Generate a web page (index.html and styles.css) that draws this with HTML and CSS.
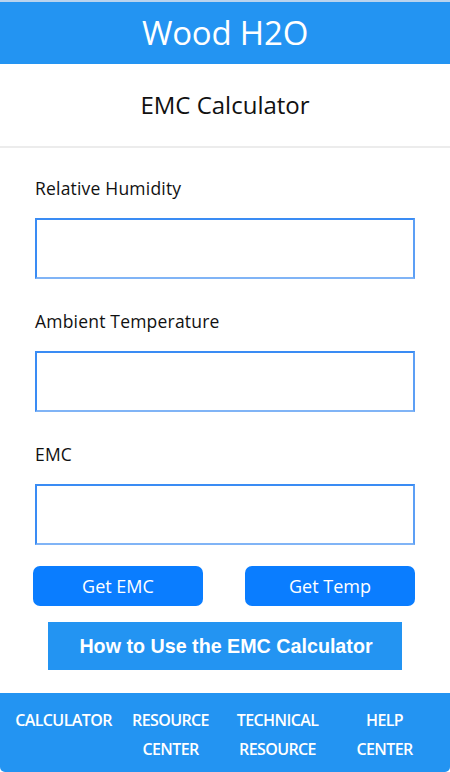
FILE: index.html
```html
<!DOCTYPE html>
<html>
<head>
<meta charset="utf-8">
<link rel="stylesheet" href="styles.css">
</head>
<body>
<div class="app">
  <header class="topbar"><h1 class="brand">Wood H2O</h1></header>
  <div class="subhead"><h2 class="page-title">EMC Calculator</h2></div>
  <main class="form">
    <label class="field-label">Relative Humidity</label>
    <div class="field-box"></div>
    <label class="field-label">Ambient Temperature</label>
    <div class="field-box"></div>
    <label class="field-label">EMC</label>
    <div class="field-box"></div>
    <div class="btn-row">
      <button class="btn">Get EMC</button>
      <button class="btn">Get Temp</button>
    </div>
    <button class="help-btn">How to Use the EMC Calculator</button>
  </main>
  <nav class="tabbar">
    <div class="tab">CALCULATOR</div>
    <div class="tab">RESOURCE<br>CENTER</div>
    <div class="tab">TECHNICAL<br>RESOURCE</div>
    <div class="tab">HELP<br>CENTER</div>
  </nav>
</div>
</body>
</html>
```

FILE: styles.css
```css
* { box-sizing: border-box; }
html, body { margin: 0; padding: 0; background: #fff; }
body { font-family: "Open Sans", "Noto Sans", sans-serif; color: #111; }
.app { width: 450px; height: 772px; display: flex; flex-direction: column; }
.topbar {
  border-top: 2px solid #b9d3ee;
  background: #2394f2;
  height: 64px;
  display: flex; align-items: center; justify-content: center;
}
.brand { margin: 0 0 2px 0; color: #fff; font-weight: 400; font-size: 33px; letter-spacing: -0.2px; }
.subhead {
  height: 84px;
  border-bottom: 2px solid #ececec;
  display: flex; align-items: center; justify-content: center;
}
.page-title { margin: 0 0 2px 0; font-weight: 400; font-size: 24px; color: #111; }
.form { padding: 27px 35px 0 35px; display: flex; flex-direction: column; flex: 1; }
.field-label { font-size: 17.5px; line-height: 26px; color: #111; margin-bottom: 17px; letter-spacing: 0.2px; }
.field-box {
  height: 61px;
  border: 2px solid #3a8cf4;
  border-bottom-color: #80b4f6;
  border-right-color: #5c9ff5;
  margin-bottom: 29px;
}
.field-box:nth-of-type(3) { margin-bottom: 21px; }
.btn-row { display: flex; justify-content: space-between; margin: 0 0 16px -2px; }
.btn {
  width: 170px; height: 40px;
  background: #0a7dff; color: #fff;
  border: none; border-radius: 7px;
  font-family: inherit; font-size: 18px;
  padding: 0;
}
.help-btn {
  align-self: center;
  width: 354px; height: 48px;
  background: #2394f2; color: #fff;
  border: none; border-radius: 0;
  font-family: "Liberation Sans", Arial, sans-serif; font-weight: 700; font-size: 19.7px;
  padding: 0 0 0 2px;
}
.tabbar {
  height: 79px;
  background: #2394f2;
  border-radius: 0 0 5px 5px;
  display: grid;
  grid-template-columns: repeat(4, 107px);
  padding: 13px 0 0 10px;
}
.tab {
  color: #fff; font-size: 16px; font-weight: 600;
  line-height: 29px; text-align: center;
  letter-spacing: -0.6px;
}
```
